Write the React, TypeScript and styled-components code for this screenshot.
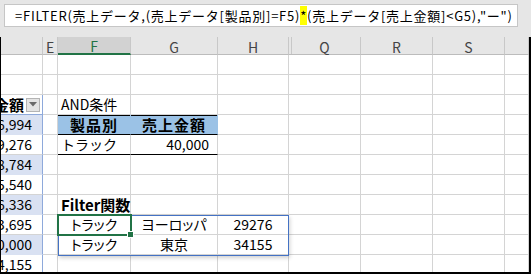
import styled, { createGlobalStyle, css } from 'styled-components';

const GlobalStyle = createGlobalStyle`
  html, body {
    margin: 0;
    padding: 0;
    background: #fff;
  }
  body {
    font-family: 'Noto Sans CJK JP', 'Noto Sans', sans-serif;
  }
`;

// D, E, F, G, H, (I..P hidden), Q, R, S, T
const COLS = '42px 15px 73px 87px 71px 72px 72px 72px 1fr';

const GRID = '#d4d4d4';
const BAND = '#d9e1f2';
const TABLE_LINE = '#8ea9db';
const HEAD_FILL = '#9bc2e6';
const GREEN = '#217346';
const SPILL = '#4472c4';

const Frame = styled.div`
  width: 531px;
  height: 274px;
  display: flex;
  flex-direction: column;
  background: #e6e6e6;
  overflow: hidden;
`;

const FormulaArea = styled.div`
  flex-shrink: 0;
  height: 37px;
  box-sizing: border-box;
  padding: 4px 13px 10px 4px;
`;

const FormulaBox = styled.div`
  height: 23px;
  box-sizing: border-box;
  background: #fff;
  border: 1px solid #c6c6c6;
  padding-left: 10px;
  font-size: 13px;
  line-height: 21px;
  letter-spacing: 0.75px;
  color: #000;
  white-space: nowrap;
  overflow: hidden;
`;

const Mark = styled.span`
  background: #ffff00;
`;

const Sheet = styled.div`
  flex: 1;
  min-height: 0;
  background: #fff;
  border-left: 1px solid #000;
  border-right: 2px solid #000;
  border-bottom: 2px solid #000;
  overflow: hidden;
`;

const HeaderRow = styled.div`
  display: grid;
  grid-template-columns: ${COLS};
  height: 18px;
  background: #e6e6e6;
`;

const ColHead = styled.div<{ $active?: boolean; $hiddenBefore?: boolean }>`
  box-sizing: border-box;
  display: flex;
  align-items: center;
  justify-content: center;
  padding-top: 2px;
  border-right: 1px solid #c8c8c8;
  border-bottom: 1px solid #bcbcbc;
  font-size: 14px;
  line-height: 1;
  color: #444;
  ${p =>
    p.$active &&
    css`
      background: #d2d2d2;
      color: ${GREEN};
      border-bottom: 2px solid ${GREEN};
    `}
  ${p =>
    p.$hiddenBefore &&
    css`
      box-shadow: inset 2px 0 0 #e6e6e6, inset 3px 0 0 #c8c8c8;
    `}
`;

const Row = styled.div`
  display: grid;
  grid-template-columns: ${COLS};
  height: 20px;
`;

type Align = 'left' | 'center' | 'right';

const Cell = styled.div<{
  $align?: Align;
  $bg?: string;
  $bottom?: string;
  $right?: string;
  $top?: string;
  $prop?: boolean;
  $padRight?: number;
}>`
  position: relative;
  box-sizing: border-box;
  height: 20px;
  padding: 0 ${p => p.$padRight ?? 3}px 0 3px;
  background: ${p => p.$bg ?? '#fff'};
  border-right: 1px solid ${p => p.$right ?? GRID};
  border-bottom: 1px solid ${p => p.$bottom ?? GRID};
  box-shadow: ${p => (p.$top ? `inset 0 1px 0 ${p.$top}` : 'none')};
  font-size: 14px;
  line-height: 19px;
  color: #000;
  white-space: nowrap;
  text-align: ${p => p.$align ?? 'left'};
  font-feature-settings: ${p => (p.$prop ? "'palt'" : 'normal')};
`;

const HeadLabel = styled.span`
  font-size: 15px;
  font-weight: 700;
  letter-spacing: 1px;
`;

const TitleLabel = styled.span`
  font-size: 15px;
  font-weight: 700;
`;

/* left table (column D, scrolled so only the right part shows) */
const TableCell = styled.div<{ $band?: boolean; $head?: boolean }>`
  box-sizing: border-box;
  height: 20px;
  display: flex;
  align-items: center;
  justify-content: flex-end;
  overflow: hidden;
  padding-right: ${p => (p.$head ? 2 : 10)}px;
  background: ${p => (p.$band ? BAND : '#fff')};
  border-right: 1px solid ${TABLE_LINE};
  border-bottom: 1px solid ${p => (p.$head ? TABLE_LINE : p.$band ? BAND : GRID)};
  font-size: 14px;
  line-height: 19px;
  white-space: nowrap;
  color: #000;
`;

const Clip = styled.div`
  flex: 1;
  min-width: 0;
  display: flex;
  justify-content: flex-end;
  overflow: hidden;
  font-size: 15px;
  font-weight: 700;
`;

const DropButton = styled.div`
  flex-shrink: 0;
  width: 14px;
  height: 14px;
  margin-left: 2px;
  box-sizing: border-box;
  display: flex;
  align-items: center;
  justify-content: center;
  background: #e4e4e4;
  border: 1px solid #b4b4b4;
`;

const SpillBox = styled.div`
  position: absolute;
  left: 0;
  top: 0;
  width: 231px;
  height: 41px;
  box-sizing: border-box;
  border: 1px solid ${SPILL};
  box-shadow: 1px 2px 4px rgba(0, 0, 0, 0.18);
  pointer-events: none;
  z-index: 1;
`;

const ActiveBox = styled.div`
  position: absolute;
  left: -1px;
  top: -1px;
  width: 75px;
  height: 22px;
  box-sizing: border-box;
  border: 2px solid ${GREEN};
  pointer-events: none;
  z-index: 2;
`;

const FillHandle = styled.div`
  position: absolute;
  right: -4px;
  bottom: -4px;
  width: 7px;
  height: 7px;
  box-sizing: border-box;
  background: ${GREEN};
  border: 1px solid #fff;
`;

const leftTable = [
  { v: '56,994', band: true },
  { v: '29,276', band: false },
  { v: '28,784', band: true },
  { v: '45,540', band: false },
  { v: '36,336', band: true },
  { v: '23,695', band: false },
  { v: '50,000', band: true },
  { v: '34,155', band: false },
];

const Blank = () => <Cell />;

const Rest = () => (
  <>
    <Blank />
    <Blank />
    <Blank />
    <Blank />
  </>
);

export default function App() {
  const d = (i: number) => {
    const r = leftTable[i];
    return <TableCell $band={r.band}>{r.v}</TableCell>;
  };

  return (
    <>
      <GlobalStyle />
      <Frame>
        <FormulaArea>
          <FormulaBox>
            =FILTER(売上データ,(売上データ[製品別]=F5)<Mark>*</Mark>(売上データ[売上金額]{'<'}G5),"ー")
          </FormulaBox>
        </FormulaArea>

        <Sheet>
          <HeaderRow>
            <ColHead />
            <ColHead>E</ColHead>
            <ColHead $active>F</ColHead>
            <ColHead>G</ColHead>
            <ColHead>H</ColHead>
            <ColHead $hiddenBefore>Q</ColHead>
            <ColHead>R</ColHead>
            <ColHead>S</ColHead>
            <ColHead />
          </HeaderRow>

          {/* 1 */}
          <Row>
            <Blank /><Blank /><Blank /><Blank /><Blank /><Rest />
          </Row>
          {/* 2 */}
          <Row>
            <Blank /><Blank /><Blank /><Blank /><Blank /><Rest />
          </Row>
          {/* 3 */}
          <Row>
            <TableCell $head>
              <Clip>売上金額</Clip>
              <DropButton>
                <svg width="8" height="5" viewBox="0 0 8 5">
                  <polygon points="0,0 8,0 4,4.5" fill="#6a6a6a" />
                </svg>
              </DropButton>
            </TableCell>
            <Blank />
            <Cell>AND条件</Cell>
            <Blank />
            <Blank />
            <Rest />
          </Row>
          {/* 4 */}
          <Row>
            {d(0)}
            <Blank />
            <Cell $align="center" $bg={HEAD_FILL} $right={HEAD_FILL} $top="#000" $bottom="#000">
              <HeadLabel>製品別</HeadLabel>
            </Cell>
            <Cell $align="center" $bg={HEAD_FILL} $right={HEAD_FILL} $top="#000" $bottom="#000">
              <HeadLabel>売上金額</HeadLabel>
            </Cell>
            <Blank />
            <Rest />
          </Row>
          {/* 5 */}
          <Row>
            {d(1)}
            <Blank />
            <Cell $bottom="#000">トラック</Cell>
            <Cell $align="right" $bottom="#000" $padRight={8}>40,000</Cell>
            <Blank />
            <Rest />
          </Row>
          {/* 6 */}
          <Row>
            {d(2)}
            <Blank /><Blank /><Blank /><Blank /><Rest />
          </Row>
          {/* 7 */}
          <Row>
            {d(3)}
            <Blank /><Blank /><Blank /><Blank /><Rest />
          </Row>
          {/* 8 */}
          <Row>
            {d(4)}
            <Blank />
            <Cell>
              <TitleLabel>Filter関数</TitleLabel>
            </Cell>
            <Blank />
            <Blank />
            <Rest />
          </Row>
          {/* 9 */}
          <Row>
            {d(5)}
            <Blank />
            <Cell $align="center" $prop>
              トラック
              <SpillBox />
              <ActiveBox>
                <FillHandle />
              </ActiveBox>
            </Cell>
            <Cell $align="center" $prop>ヨーロッパ</Cell>
            <Cell $align="center">29276</Cell>
            <Rest />
          </Row>
          {/* 10 */}
          <Row>
            {d(6)}
            <Blank />
            <Cell $align="center" $prop>トラック</Cell>
            <Cell $align="center" $prop>東京</Cell>
            <Cell $align="center">34155</Cell>
            <Rest />
          </Row>
          {/* 11 */}
          <Row>
            {d(7)}
            <Blank /><Blank /><Blank /><Blank /><Rest />
          </Row>
        </Sheet>
      </Frame>
    </>
  );
}
